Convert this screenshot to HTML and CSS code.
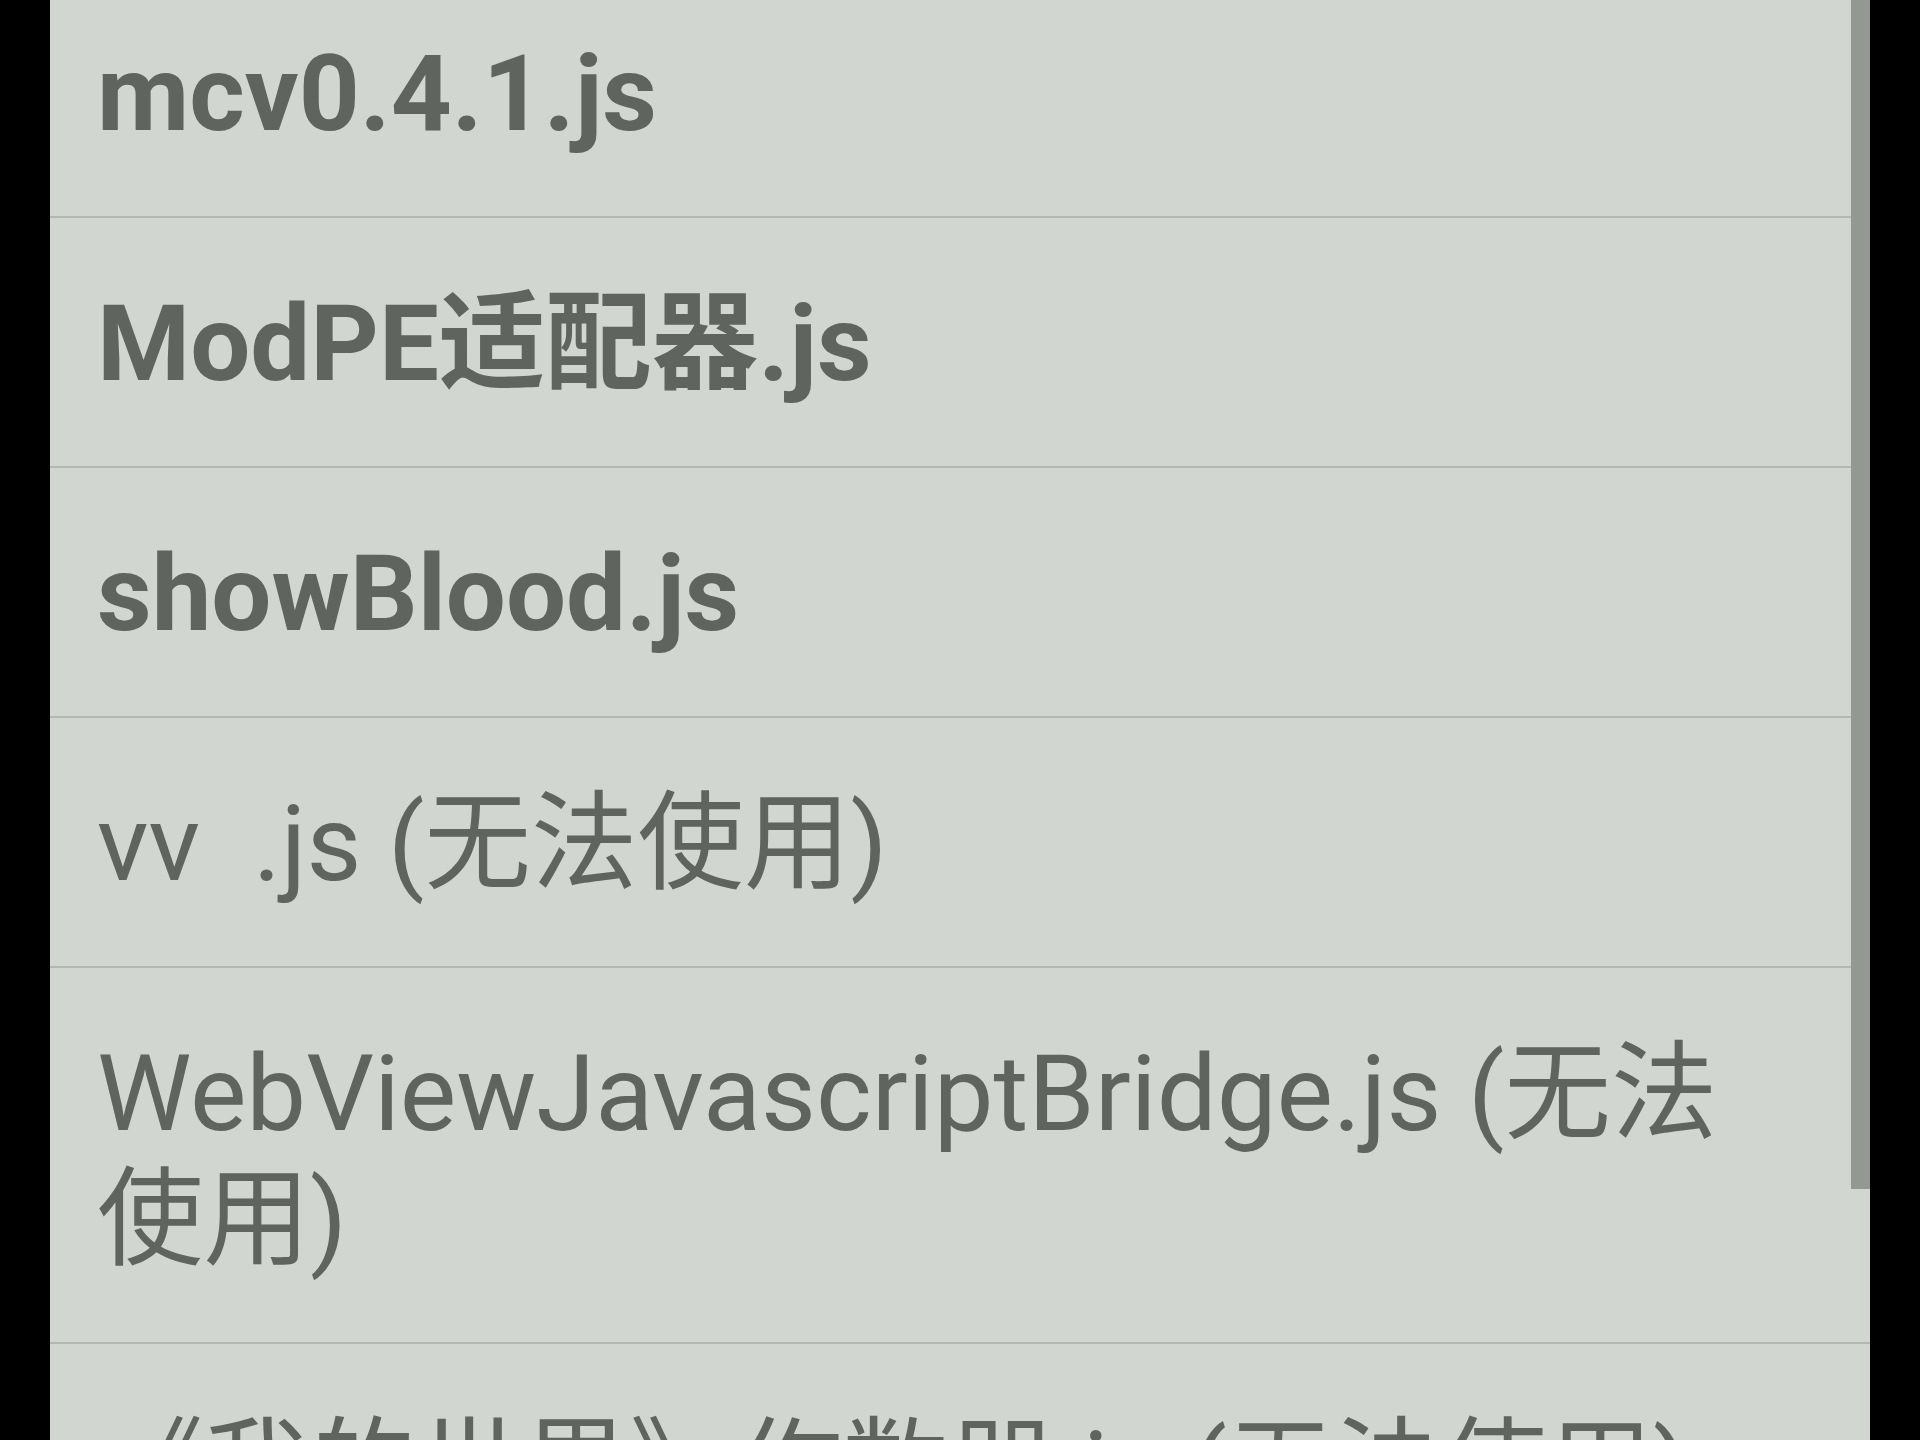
FILE: index.html
```html
<!DOCTYPE html>
<html lang="zh-CN">
<head>
<meta charset="utf-8">
<title>Scripts</title>
<link rel="stylesheet" href="styles.css">
</head>
<body>
<div class="screen">
  <div class="viewport">
    <ul class="list">
      <li class="item bold">mcv0.4.1.js</li>
      <li class="item bold">ModPE适配器.js</li>
      <li class="item bold">showBlood.js</li>
      <li class="item">vv&nbsp; .js (无法使用)</li>
      <li class="item">WebViewJavascriptBridge.js (无法使用)</li>
      <li class="item">《我的世界》作数器.js (无法使用)</li>
    </ul>
    <div class="scrollbar"></div>
  </div>
</div>
</body>
</html>
```
FILE: styles.css
```css
html, body {
  margin: 0;
  padding: 0;
  background: #000;
}
.screen {
  width: 1920px;
  height: 1440px;
  overflow: hidden;
  display: flex;
  padding-left: 50px;
  box-sizing: border-box;
}
.viewport {
  position: relative;
  width: 1820px;
  height: 1440px;
  background: #d1d6d0;
  overflow: hidden;
}
.list {
  list-style: none;
  margin: -32px 0 0 0;
  padding: 0;
}
.item {
  font-family: Roboto, "Noto Sans CJK SC", sans-serif;
  font-size: 106.5px;
  line-height: 126px;
  color: #5f645e;
  padding: 63px 100px 59px 47px;
  border-bottom: 2px solid #b3b8b2;
  font-weight: 400;
}
.item.bold {
  font-weight: 700;
}
.scrollbar {
  position: absolute;
  top: 0;
  right: 0;
  width: 19px;
  height: 1189px;
  background: #939892;
}
```
